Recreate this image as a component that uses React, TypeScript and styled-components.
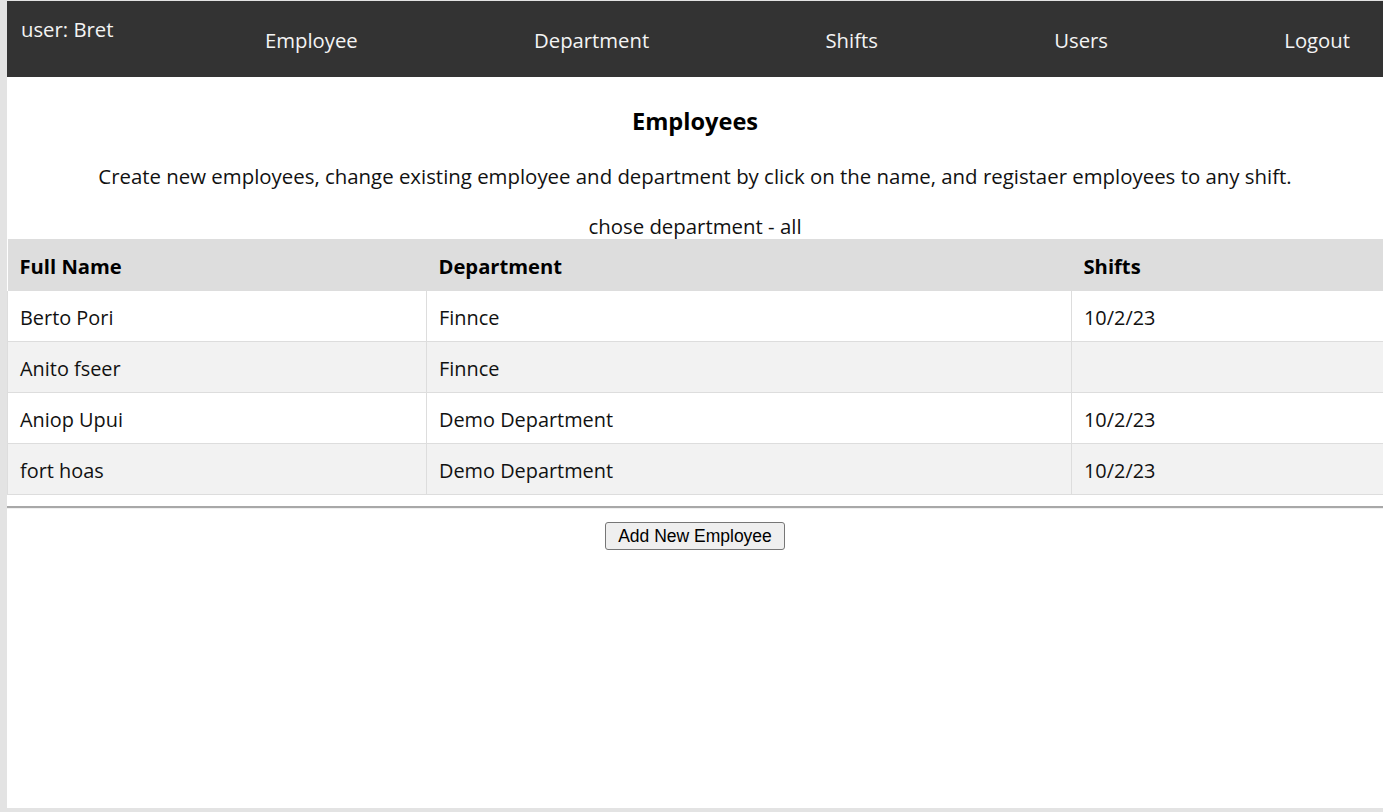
import React from "react";
import styled, { createGlobalStyle } from "styled-components";

const Global = createGlobalStyle`
  html, body { margin: 0; padding: 0; background: #e3e3e3; }
  body { font-family: "Open Sans", "Noto Sans", sans-serif; color: #111; }
  #root { padding: 1px 0 4px 7px; }
`;

const Page = styled.div`
  background: #fff;
  min-height: 807px;
  display: flex;
  flex-direction: column;
`;

const NavBar = styled.nav`
  height: 76px;
  background: #333333;
  display: flex;
  align-items: flex-start;
  padding: 0 33px 0 14px;
  color: #f4f4f4;
  font-size: 20.3px;
`;

const User = styled.div`
  padding-top: 14px;
  line-height: 28px;
  width: 244px;
`;

const Links = styled.div`
  flex: 1;
  display: flex;
  justify-content: space-between;
  padding-top: 25px;
  line-height: 28px;
`;

const NavLink = styled.a`
  color: #f4f4f4;
  text-decoration: none;
  cursor: pointer;
`;

const Title = styled.h2`
  margin: 29px 0 0;
  text-align: center;
  font-size: 23.6px;
  line-height: 30px;
  font-weight: 700;
  color: #000;
`;

const Description = styled.p`
  margin: 26px 0 0;
  text-align: center;
  font-size: 20.4px;
  line-height: 28px;
`;

const Filter = styled.div`
  margin-top: 23px;
  text-align: center;
  font-size: 20.4px;
  line-height: 26px;
`;

const Table = styled.table`
  width: 100%;
  border-collapse: collapse;
  font-size: 19.9px;
`;

const Th = styled.th`
  background: #dddddd;
  text-align: left;
  font-weight: 700;
  height: 51px;
  padding: 1px 12px 0;
  color: #000;
  font-size: 20.2px;
`;

const Tr = styled.tr<{ $alt?: boolean }>`
  background: ${(p) => (p.$alt ? "#f2f2f2" : "#ffffff")};
`;

const Td = styled.td`
  height: 48px;
  padding: 2px 12px 0;
  border: 1px solid #dddddd;
  border-top: none;
  &:last-child { border-right: none; }
`;

const Rule = styled.hr`
  margin: 11px 0 0;
  border: none;
  border-top: 2px solid #a8a8a8;
  border-bottom: 1px solid #f0f0f0;
`;

const ButtonRow = styled.div`
  display: flex;
  justify-content: center;
  margin-top: 13px;
`;

const Button = styled.button`
  font-family: "Liberation Sans", Arial, sans-serif;
  font-size: 17.5px;
  height: 28px;
  padding: 0 12px;
  background: #efefef;
  border: 1px solid #767676;
  border-radius: 3px;
  color: #000;
`;

const rows = [
  { name: "Berto Pori", dept: "Finnce", shift: "10/2/23" },
  { name: "Anito fseer", dept: "Finnce", shift: "" },
  { name: "Aniop Upui", dept: "Demo Department", shift: "10/2/23" },
  { name: "fort hoas", dept: "Demo Department", shift: "10/2/23" },
];

export default function App() {
  return (
    <>
      <Global />
      <Page>
        <NavBar>
          <User>user: Bret</User>
          <Links>
            <NavLink>Employee</NavLink>
            <NavLink>Department</NavLink>
            <NavLink>Shifts</NavLink>
            <NavLink>Users</NavLink>
            <NavLink>Logout</NavLink>
          </Links>
        </NavBar>
        <Title>Employees</Title>
        <Description>
          Create new employees, change existing employee and department by click on the name, and registaer employees to any shift.
        </Description>
        <Filter>chose department - all</Filter>
        <Table>
          <colgroup>
            <col style={{ width: 419 }} />
            <col style={{ width: 645 }} />
            <col />
          </colgroup>
          <thead>
            <tr>
              <Th>Full Name</Th>
              <Th>Department</Th>
              <Th>Shifts</Th>
            </tr>
          </thead>
          <tbody>
            {rows.map((r, i) => (
              <Tr key={r.name} $alt={i % 2 === 1}>
                <Td>{r.name}</Td>
                <Td>{r.dept}</Td>
                <Td>{r.shift}</Td>
              </Tr>
            ))}
          </tbody>
        </Table>
        <Rule />
        <ButtonRow>
          <Button>Add New Employee</Button>
        </ButtonRow>
      </Page>
    </>
  );
}
